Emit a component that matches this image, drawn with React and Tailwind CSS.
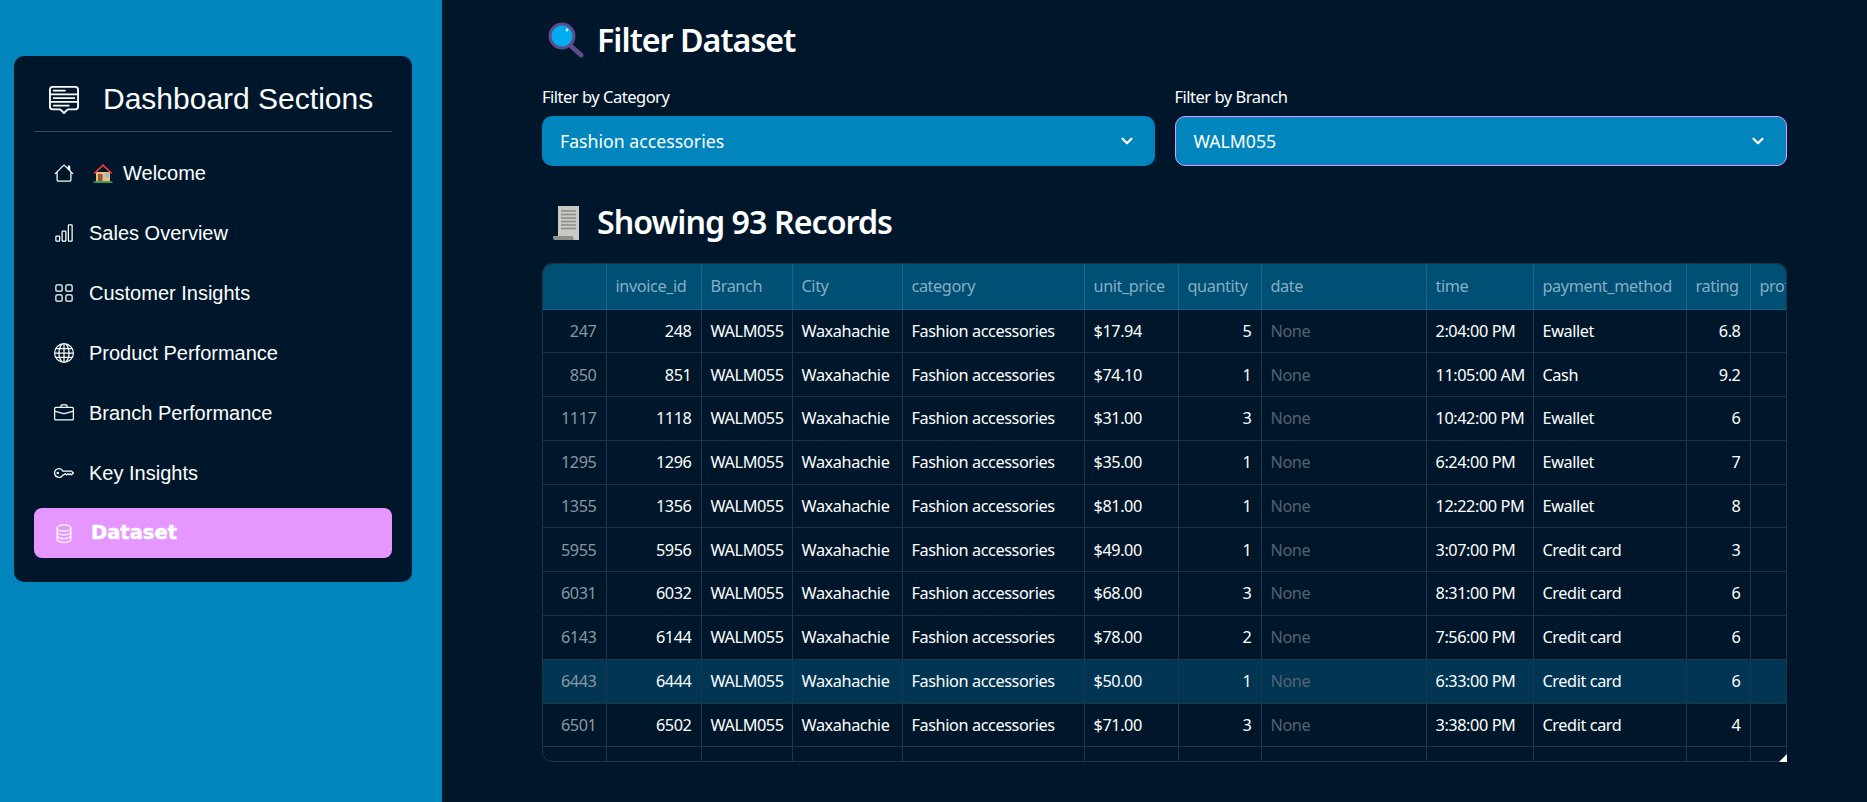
import React from 'react';
import { ChevronDown } from 'lucide-react';
import { BsMenuUp, BsHouse, BsBarChart, BsGrid, BsGlobe, BsBriefcase, BsKey, BsDatabase } from 'react-icons/bs';

const columns = [
  { key: 'index', label: '', width: 63, align: 'right', dim: true },
  { key: 'invoice_id', label: 'invoice_id', width: 95, align: 'right' },
  { key: 'branch', label: 'Branch', width: 91 },
  { key: 'city', label: 'City', width: 110 },
  { key: 'category', label: 'category', width: 182 },
  { key: 'unit_price', label: 'unit_price', width: 94 },
  { key: 'quantity', label: 'quantity', width: 83, align: 'right' },
  { key: 'date', label: 'date', width: 165, dim: true },
  { key: 'time', label: 'time', width: 107 },
  { key: 'payment_method', label: 'payment_method', width: 153 },
  { key: 'rating', label: 'rating', width: 64, align: 'right' },
  { key: 'profit_margin', label: 'profit_margin', width: 120 },
];

const raw = [
  [247, '$17.94', 5, '2:04:00 PM', 'Ewallet', 6.8],
  [850, '$74.10', 1, '11:05:00 AM', 'Cash', 9.2],
  [1117, '$31.00', 3, '10:42:00 PM', 'Ewallet', 6],
  [1295, '$35.00', 1, '6:24:00 PM', 'Ewallet', 7],
  [1355, '$81.00', 1, '12:22:00 PM', 'Ewallet', 8],
  [5955, '$49.00', 1, '3:07:00 PM', 'Credit card', 3],
  [6031, '$68.00', 3, '8:31:00 PM', 'Credit card', 6],
  [6143, '$78.00', 2, '7:56:00 PM', 'Credit card', 6],
  [6443, '$50.00', 1, '6:33:00 PM', 'Credit card', 6],
  [6501, '$71.00', 3, '3:38:00 PM', 'Credit card', 4],
  [6593, '$62.00', 2, '1:15:00 PM', 'Credit card', 5],
];

const rows = raw.map(([index, unit_price, quantity, time, payment_method, rating]) => ({
  index,
  invoice_id: index + 1,
  branch: 'WALM055',
  city: 'Waxahachie',
  category: 'Fashion accessories',
  unit_price,
  quantity,
  date: 'None',
  time,
  payment_method,
  rating,
  profit_margin: '',
}));

const navItems = [
  { label: 'Welcome', icon: BsHouse, emoji: true },
  { label: 'Sales Overview', icon: BsBarChart },
  { label: 'Customer Insights', icon: BsGrid },
  { label: 'Product Performance', icon: BsGlobe },
  { label: 'Branch Performance', icon: BsBriefcase },
  { label: 'Key Insights', icon: BsKey },
  { label: 'Dataset', icon: BsDatabase, active: true },
];

function HouseEmoji() {
  return (
    <svg viewBox="0 0 20 20" className="w-5 h-5 shrink-0">
      <path d="M3 9h14v9.500H3z" fill="#f4b878" />
      <path d="M0.500 10 10 1l9.500 9-1 1L10 3.200 1.500 11z" fill="#f03a2e" />
      <path d="M10 3.200 3 9.800V9l7-6 7 6v.8z" fill="#f03a2e" />
      <rect x="5" y="11" width="4.500" height="7.500" fill="#8a5a44" />
      <rect x="12" y="10.500" width="4" height="4" fill="#7cc4f0" />
      <rect x="0.500" y="18.500" width="19" height="1.200" fill="#2fd66b" />
    </svg>
  );
}

function MagnifierEmoji() {
  return (
    <svg viewBox="0 0 36 36" className="w-9 h-9 shrink-0">
      <path d="M24 25 33 33" stroke="#5f4b8b" strokeWidth="5" strokeLinecap="round" />
      <circle cx="14" cy="14" r="12" fill="#00adf0" stroke="#5f4b8b" strokeWidth="3" />
      <circle cx="19" cy="8" r="1.400" fill="#d9f3ff" />
    </svg>
  );
}

function ReceiptEmoji() {
  return (
    <svg viewBox="0 0 36 36" className="w-9 h-9 shrink-0">
      <path d="M10 1h21v34H10z" fill="#c9c9c5" />
      <path d="M5 31h20v2a2 2 0 0 0 2 2H7a2 2 0 0 1-2-2z" fill="#8f8f8b" />
      <path d="M13 6h15M13 9.500h15M13 13h15M13 16.500h15M13 20h15M13 23.500h15" stroke="#8b8b87" strokeWidth="1.300" />
    </svg>
  );
}

function Sidebar() {
  return (
    <aside className="w-[442px] h-full shrink-0 bg-[#0085bd] pt-14 pl-[14px] pr-[30px] font-['Liberation_Sans',Arial,sans-serif]">
      <div className="h-[526px] bg-[#00172b] rounded-[10px] px-5 text-white">
        <div className="h-[76px] pt-[10px] mb-4 flex items-center gap-[24px] pl-[15px] border-b border-[#3b4c5c]">
          <BsMenuUp className="w-[30px] h-[30px] shrink-0" />
          <span className="text-[30px] leading-none">Dashboard Sections</span>
        </div>
        <nav className="flex flex-col gap-[10px]">
          {navItems.map(item => {
            const Icon = item.icon;
            return (
              <div
                key={item.label}
                className={`h-[50px] flex items-center rounded-lg pl-[20px] ${item.active ? 'bg-[#e597ff]' : ''}`}
              >
                <Icon className={`w-5 h-5 shrink-0 ${item.emoji ? 'mr-[19px]' : 'mr-[15px]'}`} />
                {item.emoji && <span className="mr-[10px]"><HouseEmoji /></span>}
                {item.active ? (
                  <span className="text-[19.5px] leading-none font-bold ml-[2px] font-['DejaVu_Sans',sans-serif] [-webkit-text-stroke:0.5px_white]">{item.label}</span>
                ) : (
                  <span className="text-[20px] leading-none">{item.label}</span>
                )}
              </div>
            );
          })}
        </nav>
      </div>
    </aside>
  );
}

function Select({ label, value, focused }) {
  return (
    <div className="flex-1 min-w-0">
      <div className="h-[30px] pt-[2px] text-[16.5px] leading-[30px] text-white tracking-[-0.03em]">{label}</div>
      <div className={`mt-[6px] h-[50px] rounded-[10px] bg-[#0085bd] flex items-center justify-between pl-[18px] pr-[19px] text-white text-[17.7px] ${focused ? 'border border-[#e597ff]' : ''}`}>
        <span>{value}</span>
        <ChevronDown className="w-[18px] h-[18px]" strokeWidth={3} />
      </div>
    </div>
  );
}

function DataTable() {
  return (
    <div className="relative h-[499px]">
      <div className="h-full border border-[#1f3549] rounded-[10px] overflow-hidden">
        <table className="table-fixed border-collapse text-[16.25px] tracking-[-0.025em] text-white w-[1327px]">
          <colgroup>
            {columns.map(col => (
              <col key={col.key} style={{ width: col.width }} />
            ))}
          </colgroup>
          <thead>
            <tr className="h-[45px] bg-[#004f75]">
              {columns.map(col => (
                <th key={col.key} className="border-r border-b border-[#1d6288] px-[9px] text-left font-normal text-[#86aec4] whitespace-nowrap overflow-hidden">
                  {col.label}
                </th>
              ))}
            </tr>
          </thead>
          <tbody>
            {rows.map(row => (
              <tr key={row.index} className={`h-[43.8px] ${row.index === 6443 ? 'bg-[#003554]' : ''}`}>
                {columns.map(col => (
                  <td
                    key={col.key}
                    className={`border-r border-b border-[#1f3549] px-[9px] whitespace-nowrap overflow-hidden ${col.align === 'right' ? 'text-right' : ''} ${col.key === 'index' ? 'text-[#8a96a0]' : ''} ${col.key === 'date' ? 'text-[#56626e]' : ''}`}
                  >
                    {row[col.key]}
                  </td>
                ))}
              </tr>
            ))}
          </tbody>
        </table>
      </div>
      <div className="absolute right-0 bottom-0 w-[8px] h-[8px] bg-white [clip-path:polygon(100%_0,100%_100%,0_100%)]" />
    </div>
  );
}

export default function App() {
  return (
    <div className="flex h-screen overflow-hidden bg-[#00172b] font-['Noto_Sans',sans-serif]">
      <Sidebar />
      <main className="flex-1 min-w-0 pl-[100px] pr-[80px]">
        <h2 className="h-[80px] flex items-center gap-[13px] pl-[6px] text-white text-[32.2px] font-semibold tracking-[-0.03em]">
          <MagnifierEmoji />
          Filter Dataset
        </h2>
        <div className="flex gap-5">
          <Select label="Filter by Category" value="Fashion accessories" />
          <Select label="Filter by Branch" value="WALM055" focused />
        </div>
        <h2 className="h-[97px] pt-[16px] flex items-center gap-[13px] pl-[6px] text-white text-[32.2px] font-semibold tracking-[-0.03em]">
          <ReceiptEmoji />
          Showing 93 Records
        </h2>
        <DataTable />
      </main>
    </div>
  );
}
